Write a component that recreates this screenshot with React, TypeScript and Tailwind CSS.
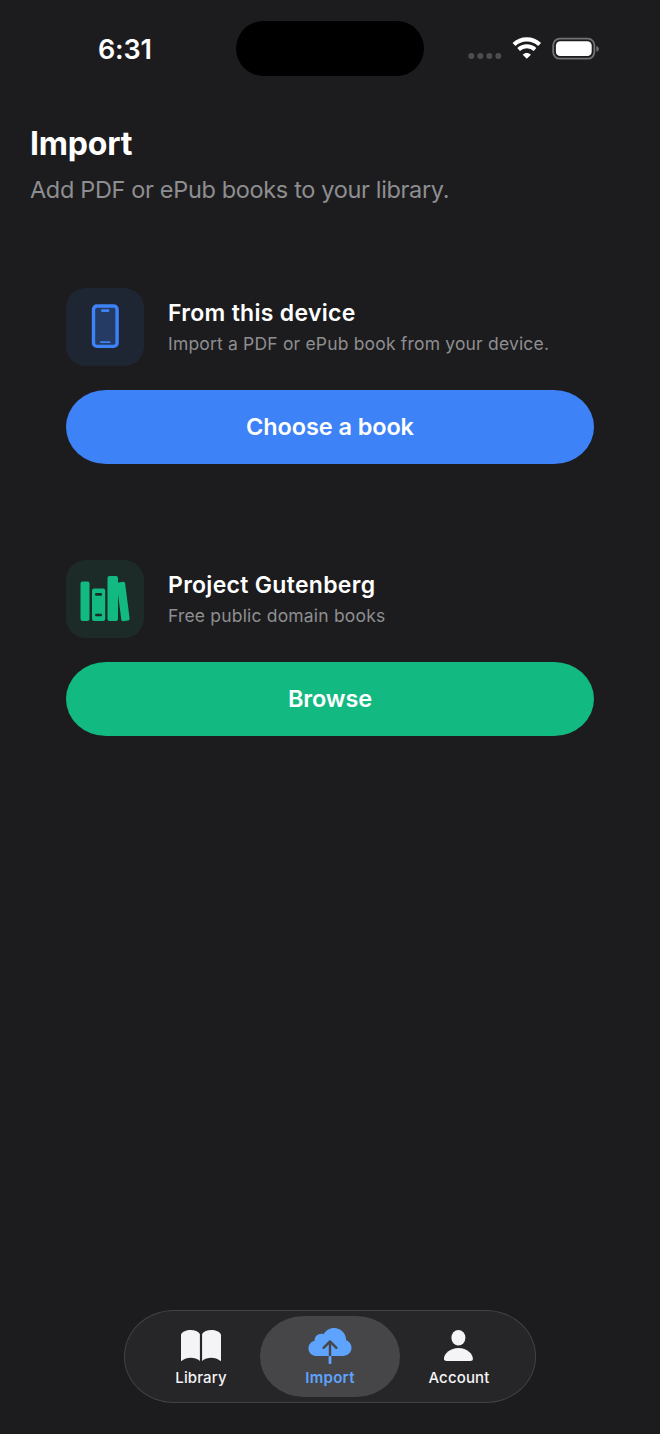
import type { ReactNode } from "react";

function StatusBar() {
  return (
    <div className="flex h-[55px] items-center">
      <div className="w-[236px] pt-[2px] pl-[98px] text-[27px] leading-[32px] font-semibold tracking-[-0.2px]">
        6:31
      </div>
      <div className="h-[55px] w-[188px] rounded-[28px] bg-black" />
      <div className="flex flex-1 items-center pl-[44px]">
        <svg width="34" height="28" viewBox="0 0 34 28" fill="#4d4d4f">
          <circle cx="3.3" cy="21" r="3" />
          <circle cx="12.3" cy="21" r="3" />
          <circle cx="21.3" cy="21" r="3" />
          <circle cx="30.3" cy="21" r="3" />
        </svg>
        <svg className="ml-[10px]" width="30" height="28" viewBox="0 0 30 28" fill="none" stroke="#fff">
          <path d="M2 9.4C9 2.6 20.6 2.6 27.6 9.4" strokeWidth="4.2" />
          <path d="M6.6 14.5C11.2 10.3 18.4 10.3 23 14.5" strokeWidth="4" />
          <path d="M14.8 23.8L10.7 19.8C13 17.4 16.6 17.4 18.9 19.8Z" fill="#fff" stroke="none" />
        </svg>
        <svg className="ml-[10px]" width="48" height="28" viewBox="0 0 48 28">
          <rect x="1.2" y="3.7" width="41.2" height="20" rx="6.6" fill="none" stroke="#737375" strokeWidth="1.8" />
          <rect x="3.9" y="6.3" width="35.8" height="14.8" rx="4.3" fill="#fff" />
          <path d="M44.4 10.9C47.6 11.7 47.6 15.9 44.4 16.7Z" fill="#737375" />
        </svg>
      </div>
    </div>
  );
}

function PhoneIcon() {
  return (
    <svg width="78" height="78" viewBox="0 0 78 78">
      <rect x="27.5" y="18" width="23.6" height="40.4" rx="3.4" fill="#253b64" stroke="#3d82f6" strokeWidth="3.4" />
      <rect x="35" y="21.2" width="8.4" height="2.8" rx="1.2" fill="#3d82f6" />
      <rect x="34" y="53.2" width="10.6" height="1.8" rx="0.9" fill="#3d82f6" />
    </svg>
  );
}

function BooksIcon() {
  return (
    <svg width="78" height="78" viewBox="0 0 78 78" fill="#12b981">
      <rect x="14.5" y="21.5" width="9" height="39.5" rx="2" />
      <rect x="26" y="28.5" width="13.2" height="32.5" rx="2" />
      <rect x="29" y="33" width="7" height="2.8" rx="1.2" fill="#1d2b28" />
      <rect x="29" y="53.8" width="7" height="2.4" rx="1.2" fill="#1d2b28" />
      <rect x="41.5" y="16" width="10.5" height="45" rx="2" />
      <path d="M52 22.4L57.2 21.8Q58.8 21.7 59.1 23.3L63.6 58.6Q63.8 60.4 62.1 60.6L57.2 61.2Q55.6 61.3 55.3 59.7L52 34Z" />
    </svg>
  );
}

function LibraryIcon() {
  return (
    <svg width="40" height="36" viewBox="0 0 40 36" fill="#f4f4f6">
      <path d="M0 6.4C1.4 3.6 5.2 2 9.6 2C13.8 2 17.4 3.4 18.9 6V33C16.6 30.8 13 29.8 9.6 29.8C6.2 29.8 3.2 30.8 0.9 32.8Q0 33.4 0 32.2Z" />
      <path d="M40 6.4C38.6 3.6 34.8 2 30.4 2C26.2 2 22.6 3.4 21.1 6V33C23.4 30.8 27 29.8 30.4 29.8C33.8 29.8 36.8 30.8 39.1 32.8Q40 33.4 40 32.2Z" />
    </svg>
  );
}

function CloudIcon() {
  return (
    <svg width="44" height="36" viewBox="0 0 44 36" fill="none">
      <path
        d="M9 28C4 28 0.5 24.8 0.5 20.4C0.5 16.6 3 13.7 6.6 12.8C6.3 8.2 11 4.6 15.6 6.2C17.8 2.4 21.6 0 26 0C32.7 0 38 5.2 38.2 12.2C41.4 13.4 43.5 16.4 43.5 19.8C43.5 24.5 39.8 28 34.8 28Z"
        fill="#5ea4ff"
      />
      <path d="M22 28V14M15.6 19.8L22 13.4L28.4 19.8" stroke="#464648" strokeWidth="2.4" strokeLinecap="round" strokeLinejoin="round" />
      <rect x="20.6" y="28" width="2.8" height="8" rx="0.8" fill="#5ea4ff" />
    </svg>
  );
}

function AccountIcon() {
  return (
    <svg width="30" height="36" viewBox="0 0 30 36" fill="#f4f4f6">
      <ellipse cx="14.4" cy="9.8" rx="7" ry="7.7" />
      <path d="M2.6 33C0.6 33 -0.1 32.2 -0.1 30.8C-0.1 26.2 5.6 20 14.4 20C23.2 20 28.9 26.2 28.9 30.8C28.9 32.2 28.2 33 26.2 33Z" />
    </svg>
  );
}

type SourceProps = {
  icon: ReactNode;
  iconClass: string;
  title: ReactNode;
  description: ReactNode;
  action: ReactNode;
  buttonClass: string;
};

function ImportSource({ icon, iconClass, title, description, action, buttonClass }: SourceProps) {
  return (
    <section>
      <div className="flex items-center gap-6">
        <div className={`h-[78px] w-[78px] rounded-[20px] ${iconClass}`}>{icon}</div>
        <div className="pt-[1px]">
          <h2 className="text-[23px] leading-[32px] font-semibold tracking-[0.3px] whitespace-nowrap">{title}</h2>
          <p className="text-[17.5px] leading-[30px] tracking-[0.18px] whitespace-nowrap text-[#8e8e91]">
            {description}
          </p>
        </div>
      </div>
      <button
        className={`mt-6 block h-[74px] w-full rounded-[40px/37px] text-[23.5px] font-semibold tracking-[-0.1px] text-white ${buttonClass}`}
      >
        {action}
      </button>
    </section>
  );
}

function Tab({ icon, label, active = false }: { icon: ReactNode; label: ReactNode; active?: boolean }) {
  return (
    <button
      className={`flex h-[81px] flex-col items-center pt-[12px] text-[15px] leading-[18px] ${
        active
          ? "w-[140px] rounded-[44px/40px] bg-[#464648] font-semibold tracking-[0.3px] text-[#5ea4ff]"
          : "w-[118px] font-medium tracking-[0.15px] text-[#f4f4f6]"
      }`}
    >
      {icon}
      <span className="mt-[5px]">{label}</span>
    </button>
  );
}

export default function App() {
  return (
    <div className="flex h-[1434px] w-[660px] flex-col bg-[#1c1c1e] pt-[21px] font-['Inter',sans-serif] text-white antialiased">
      <StatusBar />

      <header className="pt-[48px] pl-[30px]">
        <h1 className="text-[32px] leading-[40px] font-bold tracking-[-0.2px]">Import</h1>
        <p className="mt-[10px] text-[23.5px] leading-[32px] tracking-[-0.34px] text-[#8e8e91]">
          Add PDF or ePub books to your library.
        </p>
      </header>

      <main className="flex flex-1 flex-col gap-[96px] px-[66px] pt-[82px]">
        <ImportSource
          icon={<PhoneIcon />}
          iconClass="bg-[#1f2633]"
          title="From this device"
          description="Import a PDF or ePub book from your device."
          action="Choose a book"
          buttonClass="bg-[#3d82f6]"
        />
        <ImportSource
          icon={<BooksIcon />}
          iconClass="bg-[#1d2b28]"
          title="Project Gutenberg"
          description="Free public domain books"
          action="Browse"
          buttonClass="bg-[#12b981]"
        />
      </main>

      <nav className="mx-auto mb-[31px] flex h-[93px] w-[412px] items-center justify-center rounded-[50px/46px] border border-[#424244] bg-[#262628]">
        <Tab icon={<LibraryIcon />} label="Library" />
        <Tab icon={<CloudIcon />} label="Import" active />
        <Tab icon={<AccountIcon />} label="Account" />
      </nav>
    </div>
  );
}
